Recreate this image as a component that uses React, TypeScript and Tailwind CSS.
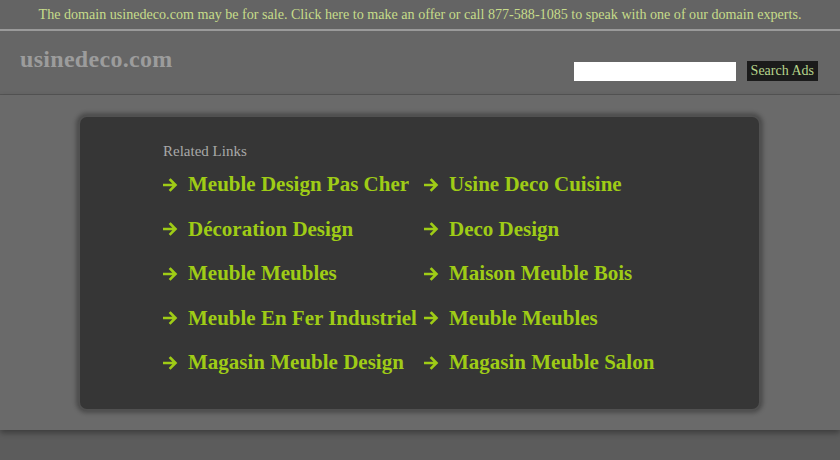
import React from "react";

const links: [string, string][] = [
  ["Meuble Design Pas Cher", "Usine Deco Cuisine"],
  ["Décoration Design", "Deco Design"],
  ["Meuble Meubles", "Maison Meuble Bois"],
  ["Meuble En Fer Industriel", "Meuble Meubles"],
  ["Magasin Meuble Design", "Magasin Meuble Salon"],
];

function Arrow() {
  return (
    <svg width="15" height="14" viewBox="0 0 15 14" className="shrink-0">
      <path d="M1 7h11M7.5 2l5 5-5 5" fill="none" stroke="#9fcc16" strokeWidth="2.6" strokeLinecap="square" />
    </svg>
  );
}

function LinkItem({ label }: { label: string }) {
  return (
    <a href="#" className="flex items-center gap-[10px] text-[#9fcc16] font-bold text-[21px] leading-none whitespace-nowrap">
      <Arrow />
      <span>{label}</span>
    </a>
  );
}

export default function App() {
  return (
    <div className="w-[840px] h-[460px] overflow-hidden bg-[#5c5c5c] font-['Liberation_Serif',serif]">
      <div className="h-[29px] bg-[#646464] flex items-center justify-center text-[14.1px] text-[#c6dc8a]">
        The domain usinedeco.com may be for sale. Click here to make an offer or call 877-588-1085 to speak with one of our domain experts.
      </div>
      <div className="h-[2px] bg-[#9a9a9a]" />
      <div className="h-[64px] bg-[#666666] border-b border-[#555] flex items-start justify-between px-[20px]">
        <div className="pt-[16px] text-[24px] font-bold text-[#9c9c9c] tracking-[0.3px] leading-none">usinedeco.com</div>
        <div className="flex items-center gap-[11px] pt-[30px] pr-[2px]">
          <input className="w-[162px] h-[19px] bg-white border-0 outline-none" />
          <button className="h-[20px] px-[4px] bg-[#1b1b1b] text-[#b7d58c] text-[14px] leading-none">Search Ads</button>
        </div>
      </div>
      <div className="h-[335px] bg-[#6a6a6a] shadow-[0_3px_6px_rgba(0,0,0,0.35)] pt-[20px] pl-[78px]">
        <div className="w-[683px] h-[296px] rounded-[9px] bg-[#363636] border-[2px] border-[#505050] shadow-[0_0_4px_2px_rgba(0,0,0,0.3)] pl-[83px] pt-[27px]">
          <div className="text-[15px] text-[#a8a8a8] leading-none mb-[15px]">Related Links</div>
          <div className="flex flex-col gap-[23.5px]">
            {links.map(([a, b], i) => (
              <div key={i} className="flex">
                <div className="w-[261px]"><LinkItem label={a} /></div>
                <LinkItem label={b} />
              </div>
            ))}
          </div>
        </div>
      </div>
    </div>
  );
}
